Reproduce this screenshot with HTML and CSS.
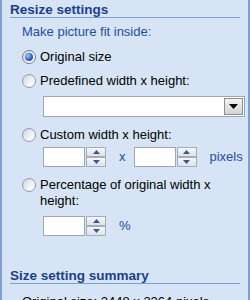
FILE: index.html
```html
<!DOCTYPE html>
<html lang="en">

<head>
    <meta charset="UTF-8">
    <title>Resize settings</title>
    <link rel="stylesheet" href="styles.css">
</head>

<body>
    <div class="panel">
        <h2 class="section-title">Resize settings</h2>
        <div class="section-body">
            <p class="hint">Make picture fit inside:</p>
            <label class="option">
                <span class="radio checked"></span>
                <span>Original size</span>
            </label>
            <label class="option">
                <span class="radio"></span>
                <span>Predefined width x height:</span>
            </label>
            <div class="indent">
                <div class="select">
                    <span class="select-btn">
                        <svg width="9" height="5" viewBox="0 0 9 5">
                            <path d="M0 0 H9 L4.5 5 Z" fill="#000"/>
                        </svg>
                    </span>
                </div>
            </div>
            <label class="option gap">
                <span class="radio"></span>
                <span>Custom width x height:</span>
            </label>
            <div class="indent spin-row">
                <div class="spinner">
                    <span class="spin-field"></span>
                    <span class="spin-btns">
                        <span class="spin-btn"><svg width="7" height="4" viewBox="0 0 7 4"><path d="M0 4 L3.5 0 L7 4 Z" fill="#3f5590"/></svg></span>
                        <span class="spin-btn"><svg width="7" height="4" viewBox="0 0 7 4"><path d="M0 0 H7 L3.5 4 Z" fill="#3f5590"/></svg></span>
                    </span>
                </div>
                <span class="unit times">x</span>
                <div class="spinner second">
                    <span class="spin-field"></span>
                    <span class="spin-btns">
                        <span class="spin-btn"><svg width="7" height="4" viewBox="0 0 7 4"><path d="M0 4 L3.5 0 L7 4 Z" fill="#3f5590"/></svg></span>
                        <span class="spin-btn"><svg width="7" height="4" viewBox="0 0 7 4"><path d="M0 0 H7 L3.5 4 Z" fill="#3f5590"/></svg></span>
                    </span>
                </div>
                <span class="unit pixels">pixels</span>
            </div>
            <label class="option gap">
                <span class="radio"></span>
                <span>Percentage of original width x<br>height:</span>
            </label>
            <div class="indent spin-row after-wrap">
                <div class="spinner">
                    <span class="spin-field"></span>
                    <span class="spin-btns">
                        <span class="spin-btn"><svg width="7" height="4" viewBox="0 0 7 4"><path d="M0 4 L3.5 0 L7 4 Z" fill="#3f5590"/></svg></span>
                        <span class="spin-btn"><svg width="7" height="4" viewBox="0 0 7 4"><path d="M0 0 H7 L3.5 4 Z" fill="#3f5590"/></svg></span>
                    </span>
                </div>
                <span class="unit times">%</span>
            </div>
        </div>
        <h2 class="section-title summary">Size setting summary</h2>
        <p class="summary-text">Original size: 2448 x 3264 pixels</p>
    </div>
</body>

</html>
```

FILE: styles.css
```css
* {
    margin: 0;
    padding: 0;
    box-sizing: border-box;
}

body {
    font-family: Tahoma, "Liberation Sans", Arial, sans-serif;
    font-size: 13px;
    color: #000;
    background-color: #d6e4f5;
    overflow: hidden;
}

.panel {
    height: 300px;
    padding: 0 8px;
    background-color: #d6e4f5;
    border-left: 2px solid #7c9fd3;
    border-right: 2px solid #7c9fd3;
    overflow: hidden;
}

.section-title {
    padding-top: 3px;
    font-size: 13.5px;
    line-height: 14px;
    font-weight: bold;
    color: #1c3e8c;
    border-bottom: 1px solid #7c9fd3;
}

.section-title.summary {
    margin-top: 30px;
}

.section-body {
    padding-left: 12px;
}

.hint {
    margin-top: 6px;
    line-height: 15px;
    color: #1f4f9f;
}

.option {
    display: flex;
    align-items: flex-start;
    padding: 4px 0;
    line-height: 16px;
}

.hint + .option {
    margin-top: 6px;
}

.option.gap {
    margin-top: 6px;
}

.radio {
    flex: none;
    width: 14px;
    height: 14px;
    margin: 1px 4px 0 0;
    border: 1px solid #8f9aab;
    border-radius: 50%;
    background: linear-gradient(135deg, #cfd5dc, #f4f5f7 65%, #ffffff);
    position: relative;
}

.radio.checked {
    border-color: #6f7d94;
}

.radio.checked::after {
    content: "";
    position: absolute;
    left: 2px;
    top: 2px;
    width: 8px;
    height: 8px;
    border-radius: 50%;
    background: radial-gradient(circle at 35% 35%, #a6cbf7, #2a66c4 55%, #103882);
}

.indent {
    padding-left: 21px;
}

.select {
    margin-top: 3px;
    height: 21px;
    width: 202px;
    background-color: #fff;
    border: 1px solid #9ea6b2;
    display: flex;
    justify-content: flex-end;
    padding: 1px;
}

.select-btn {
    width: 19px;
    height: 17px;
    border: 1px solid #8a8f98;
    background: linear-gradient(#f4f4f4, #d2d2d2);
    display: flex;
    align-items: center;
    justify-content: center;
}

.spin-row {
    display: flex;
    align-items: center;
}

.spin-row.after-wrap {
    margin-top: 3px;
}

.spinner {
    display: flex;
    height: 20px;
}

.spin-field {
    width: 42px;
    height: 20px;
    background-color: #fff;
    border: 1px solid #9ea6b2;
}

.spin-btns {
    display: flex;
    flex-direction: column;
    width: 20px;
    margin-left: 1px;
}

.spin-btn {
    height: 10px;
    border: 1px solid #a5adb8;
    background: linear-gradient(#f5f7fa, #dde3ea);
    display: flex;
    align-items: center;
    justify-content: center;
}

.unit {
    color: #1f4f9f;
    line-height: 16px;
}

.unit.times {
    margin-left: 13px;
}

.spinner.second {
    margin-left: 8px;
}

.unit.pixels {
    margin-left: 13px;
}

.summary-text {
    margin-top: 10px;
    padding-left: 12px;
    line-height: 15px;
}
```
